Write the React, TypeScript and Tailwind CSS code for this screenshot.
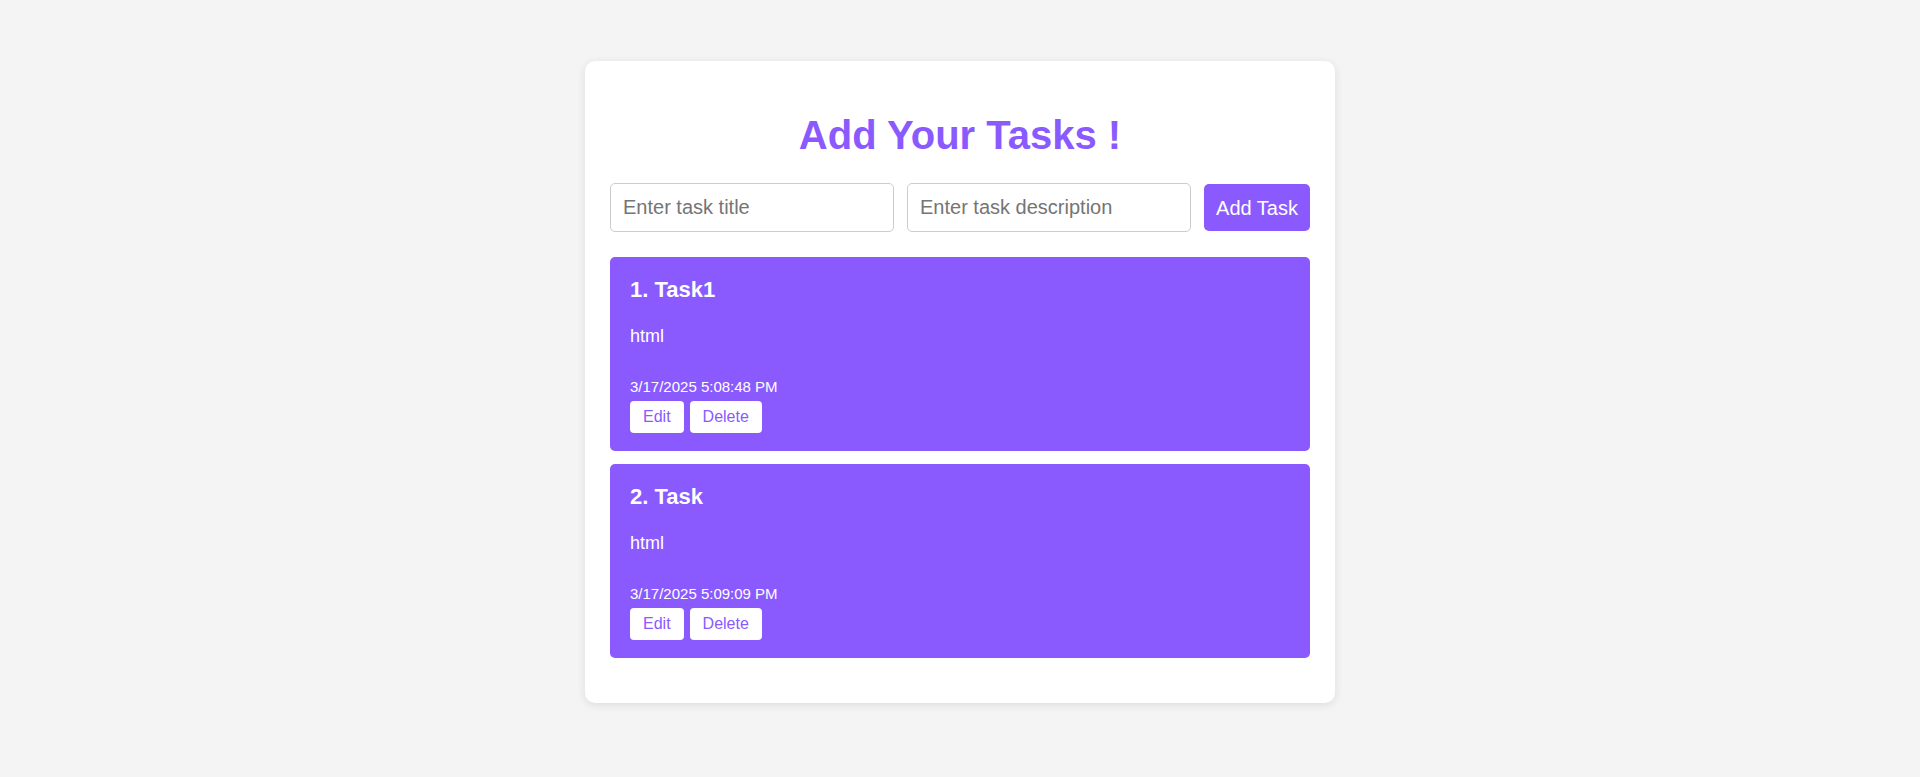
import React, { useState } from 'react';

type Task = {
  id: number;
  title: string;
  description: string;
  createdAt: string;
};

const initialTasks: Task[] = [
  { id: 1, title: 'Task1', description: 'html', createdAt: '3/17/2025 5:08:48 PM' },
  { id: 2, title: 'Task', description: 'html', createdAt: '3/17/2025 5:09:09 PM' },
];

const App = () => {
  const [tasks, setTasks] = useState<Task[]>(initialTasks);
  const [title, setTitle] = useState('');
  const [description, setDescription] = useState('');

  const addTask = () => {
    if (!title.trim()) return;
    setTasks([
      ...tasks,
      {
        id: Date.now(),
        title,
        description,
        createdAt: new Date().toLocaleString('en-US'),
      },
    ]);
    setTitle('');
    setDescription('');
  };

  const deleteTask = (id: number) => setTasks(tasks.filter(t => t.id !== id));

  return (
    <div className="min-h-screen bg-[#f4f4f4] pt-[61px] font-['Liberation_Sans',Arial,sans-serif]">
      <div className="mx-auto w-[750px] rounded-[10px] bg-white px-[25px] pt-[51px] pb-[45px] shadow-[0_2px_10px_rgba(0,0,0,0.1)]">
        <h1 className="text-center text-[40px] leading-[46px] font-bold text-[#8a5aff]">
          Add Your Tasks !
        </h1>

        {/* Form */}
        <div className="mt-[25px] flex items-center gap-[13px]">
          <input
            value={title}
            onChange={e => setTitle(e.target.value)}
            placeholder="Enter task title"
            className="h-[49px] min-w-0 flex-1 rounded-[5px] border border-[#ccc] px-[12px] text-[20px] text-black outline-none placeholder:text-[#757575]"
          />
          <input
            value={description}
            onChange={e => setDescription(e.target.value)}
            placeholder="Enter task description"
            className="h-[49px] min-w-0 flex-1 rounded-[5px] border border-[#ccc] px-[12px] text-[20px] text-black outline-none placeholder:text-[#757575]"
          />
          <button
            onClick={addTask}
            className="h-[47px] w-[106px] rounded-[5px] bg-[#8a5aff] text-[20px] text-white"
          >
            Add Task
          </button>
        </div>

        {/* Task list */}
        <div className="mt-[25px] flex flex-col gap-[13px]">
          {tasks.map((task, index) => (
            <div key={task.id} className="rounded-[5px] bg-[#8a5aff] px-[20px] pt-[20px] pb-[18px] text-white">
              <h3 className="text-[22px] leading-[25px] font-bold">
                {index + 1}. {task.title}
              </h3>
              <p className="mt-[24px] text-[18px] leading-[21px]">{task.description}</p>
              <p className="mt-[31px] text-[15px] leading-[17px]">{task.createdAt}</p>
              <div className="mt-[6px] flex gap-[6px]">
                <button className="rounded-[4px] bg-white px-[13px] py-[7px] text-[16px] leading-[18px] text-[#8a5aff]">
                  Edit
                </button>
                <button
                  onClick={() => deleteTask(task.id)}
                  className="rounded-[4px] bg-white px-[13px] py-[7px] text-[16px] leading-[18px] text-[#8a5aff]"
                >
                  Delete
                </button>
              </div>
            </div>
          ))}
        </div>
      </div>
    </div>
  );
};

export default App;
